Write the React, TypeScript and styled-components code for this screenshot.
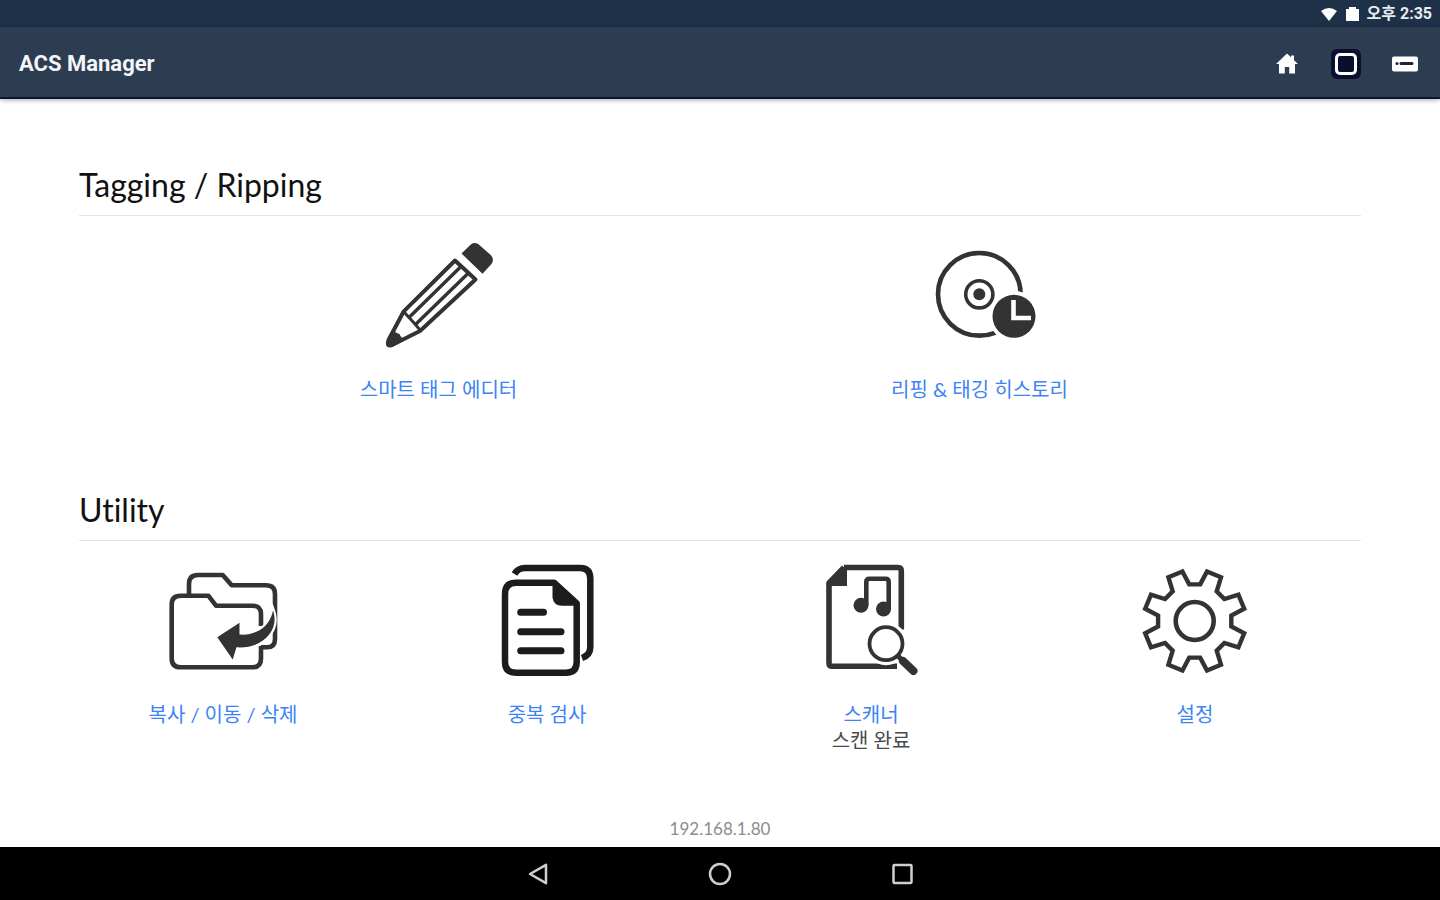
import React from 'react';
import styled, { createGlobalStyle } from 'styled-components';

const INK = '#333333';

const GlobalStyle = createGlobalStyle`
  *, *::before, *::after { box-sizing: border-box; }
  body {
    margin: 0;
    background: #ffffff;
    color: #111111;
    font-family: Lato, "Noto Sans CJK KR", sans-serif;
    font-variant-ligatures: none;
  }
`;

const Screen = styled.div`
  display: flex;
  flex-direction: column;
  min-height: 100vh;
`;

const StatusBar = styled.div`
  display: flex;
  align-items: center;
  justify-content: flex-end;
  gap: 8px;
  height: 27px;
  padding: 0 8px;
  background: #1d3149;
  color: #e9edf1;
`;

const Clock = styled.time`
  font: 700 16px/20px Roboto, "Noto Sans CJK KR", sans-serif;
`;

const Header = styled.header`
  display: flex;
  align-items: center;
  justify-content: space-between;
  height: 72px;
  padding: 4px 20px 0 19px;
  background: #2d3d51;
  border-bottom: 2px solid #04173a;
  box-shadow: 0 1px 5px rgba(0, 0, 0, 0.35);
`;

const Title = styled.h1`
  margin: 0;
  color: #f4f6f8;
  font: 700 22px/28px Roboto, sans-serif;
`;

const Actions = styled.div`
  display: flex;
  gap: 29px;
`;

const IconButton = styled.button`
  display: flex;
  padding: 0;
  border: 0;
  background: none;
  cursor: pointer;
`;

const Main = styled.main`
  display: flex;
  flex: 1;
  flex-direction: column;
  gap: 88px;
  padding: 66px 79px 20px;
`;

const SectionTitle = styled.h2`
  margin: 0 0 20px;
  padding-bottom: 10px;
  border-bottom: 1px solid #e4e4e4;
  font-size: 32px;
  font-weight: 400;
  line-height: 40px;
`;

const Tiles = styled.div<{ $columns: number; $inset: number }>`
  display: grid;
  grid-template-columns: repeat(${(p) => p.$columns}, 1fr);
  margin: 0 ${(p) => p.$inset + 22}px 0 ${(p) => p.$inset}px;
`;

const Tile = styled.button`
  display: flex;
  flex-direction: column;
  align-items: center;
  justify-content: flex-start;
  padding: 0;
  border: 0;
  background: none;
  color: #3c83f6;
  font: inherit;
  font-size: 20px;
  line-height: 26px;
  cursor: pointer;

  svg {
    margin-bottom: 20px;
  }
`;

const TileNote = styled.span`
  color: #4a4a4a;
`;

const Address = styled.footer`
  padding-bottom: 8px;
  color: #8c8c8c;
  font-size: 17px;
  line-height: 20px;
  text-align: center;
`;

const NavBar = styled.nav`
  display: flex;
  align-items: center;
  justify-content: center;
  gap: 158px;
  height: 53px;
  background: #000000;
`;

interface DrawingProps {
  top?: number;
  ink?: string;
  children: React.ReactNode;
}

function Drawing({ top = 1, ink = INK, children }: DrawingProps) {
  return (
    <svg width="120" height="120" viewBox={`0 ${top} 120 120`} fill="none" stroke={ink} aria-hidden="true">
      {children}
    </svg>
  );
}

function Pencil() {
  return (
    <Drawing top={4}>
      <path d="M76 28.500 96.500 47.500 41 99 13 113 Q8 114 9.500 108 L24.500 79.700Z" strokeWidth="4" strokeLinejoin="round" />
      <path d="M83 33.500 30 85.500M90 40.500 36.500 92.500" strokeWidth="3.400" />
      <path d="M25 80 30.500 86 35.500 91.500 41 98" strokeWidth="3" />
      <path d="M14 96.500 Q16 101 20.500 102 Q21.500 106 27 107.500 L13 115 Q6 117 7 110Z" fill={INK} stroke="none" />
      <path d="M82.500 21.500 91 13.200 Q94.800 9.200 99.500 12.200 L112 23.200 Q115.500 27.500 112.500 32 L103.500 41.800Z" fill={INK} stroke="none" />
    </Drawing>
  );
}

function DiscClock() {
  return (
    <Drawing top={4}>
      <circle cx="59.300" cy="62.300" r="41.300" strokeWidth="4.600" />
      <circle cx="59.300" cy="62.300" r="13.600" strokeWidth="3.600" />
      <circle cx="59.300" cy="62.300" r="6" fill={INK} stroke="none" />
      <circle cx="94" cy="84.300" r="25.500" fill="#ffffff" stroke="none" />
      <circle cx="94" cy="84.300" r="21.500" fill={INK} stroke="none" />
      <path d="M93.500 68V86H111" stroke="#ffffff" strokeWidth="4.600" />
    </Drawing>
  );
}

function Folders() {
  return (
    <Drawing>
      <g strokeWidth="4.600" strokeLinejoin="round">
        <path d="M26 34V24Q26 15 35 15H59.700L68.700 25.300H103Q112 25.300 112 34V79Q112 87.300 104 87.300H98" />
        <path d="M98 66V54Q98 45.700 89.500 45.700H53L45.300 35.700H17.500Q8.700 35.700 8.700 44.500V98.500Q8.700 107.300 17.500 107.300H89.500Q98 107.300 98 98.500V86" />
      </g>
      <path
        d="M54.300 77.300 76.500 62.800V74.500C94 76 107 66 110 50.500C117 70 100 89 73.500 87.300L69.700 99.500Z"
        fill={INK}
        stroke="#ffffff"
        strokeWidth="4"
        paintOrder="stroke"
      />
    </Drawing>
  );
}

function Documents() {
  return (
    <Drawing ink="#1c1c1c">
      <g strokeWidth="6.500">
        <path d="M27.500 14Q31 8 38 8H93Q103.300 8 103.300 18.500V87Q103.300 95 95 98" />
        <path
          d="M29 22.700H67L89.700 43.500V102Q89.700 112.700 79 112.700H29Q18 112.700 18 102V34Q18 22.700 29 22.700Z"
          strokeLinejoin="round"
        />
      </g>
      <path d="M65.500 23V37.500Q66.500 45.700 75 45.700H91L70 23Z" fill="#1c1c1c" stroke="none" />
      <path d="M33.700 52.300H56.500M33.700 71.700H74M33.700 90.700H74" strokeLinecap="round" strokeWidth="7" />
    </Drawing>
  );
}

function Scanner() {
  return (
    <Drawing>
      <path d="M33 7.500H87Q90.300 7.500 90.300 11V69.500M86 106.300H21Q18 106.300 18 103V23L33 7.500" strokeWidth="5.600" strokeLinejoin="round" />
      <path d="M17 23 33 6.500 36 8V26H17Z" fill={INK} stroke="none" />
      <path d="M55.300 45V22Q55.300 18.800 58.500 18.800H74.500Q77.700 18.800 77.700 22V49" strokeWidth="4.600" />
      <circle cx="50" cy="45.300" r="7.500" fill={INK} stroke="none" />
      <circle cx="72.500" cy="49" r="7.500" fill={INK} stroke="none" />
      <circle cx="75" cy="83.700" r="21.500" fill="#ffffff" stroke="none" />
      <circle cx="75" cy="83.700" r="16.500" strokeWidth="3.800" />
      <path d="M87 96 91 100" strokeWidth="5" />
      <path d="M92 101 102.500 111" strokeWidth="8" strokeLinecap="round" />
    </Drawing>
  );
}

function gearOutline(cx: number, cy: number): string {
  const points: string[] = [];
  const add = (degrees: number, radius: number) => {
    const a = (degrees * Math.PI) / 180;
    points.push(`${(cx + radius * Math.sin(a)).toFixed(1)},${(cy - radius * Math.cos(a)).toFixed(1)}`);
  };
  for (let tooth = 0; tooth < 8; tooth += 1) {
    const middle = 22.5 + tooth * 45;
    add(middle - 14, 37);
    add(middle - 8.5, 51);
    add(middle + 8.5, 51);
    add(middle + 14, 37);
  }
  return points.join(' ');
}

function Gear() {
  return (
    <Drawing>
      <polygon points={gearOutline(59.7, 61)} strokeWidth="4.400" />
      <circle cx="59.700" cy="61" r="19" strokeWidth="4.600" />
    </Drawing>
  );
}

export default function App() {
  return (
    <Screen>
      <GlobalStyle />
      <StatusBar>
        <svg width="18" height="14" viewBox="0 0 18 14" fill="#ffffff" aria-hidden="true">
          <path d="M1 4Q9-2 17 4L9 14Z" />
        </svg>
        <svg width="13" height="16" viewBox="0 0 13 16" fill="#ffffff" aria-hidden="true">
          <path d="M0 3H3V1H10V3H13V15H0Z" />
        </svg>
        <Clock>오후 2:35</Clock>
      </StatusBar>
      <Header>
        <Title>ACS Manager</Title>
        <Actions>
          <IconButton aria-label="Home">
            <svg width="30" height="30" viewBox="0 0 30 30" fill="#ffffff" aria-hidden="true">
              <path d="M15 4.500 4 15H7V24.500H12.800V18H17.200V24.500H23V15H26L22 11.200V6.500H19V8.300Z" />
            </svg>
          </IconButton>
          <IconButton aria-label="Select">
            <svg width="30" height="30" viewBox="0 0 30 30" aria-hidden="true">
              <rect width="30" height="30" rx="6" fill="#0b0e2c" />
              <rect x="5.500" y="5.500" width="19" height="19" rx="3.500" fill="none" stroke="#ffffff" strokeWidth="3" />
            </svg>
          </IconButton>
          <IconButton aria-label="Device">
            <svg width="30" height="30" viewBox="0 0 30 30" aria-hidden="true">
              <rect x="2" y="7.500" width="26" height="15" rx="2" fill="#ffffff" />
              <circle cx="7" cy="14.500" r="1.500" fill="#16263f" />
              <path d="M11 14.500H22" stroke="#16263f" strokeWidth="3" strokeLinecap="round" />
            </svg>
          </IconButton>
        </Actions>
      </Header>
      <Main>
        <section>
          <SectionTitle>Tagging / Ripping</SectionTitle>
          <Tiles $columns={2} $inset={89}>
            <Tile>
              <Pencil />
              스마트 태그 에디터
            </Tile>
            <Tile>
              <DiscClock />
              리핑 &amp; 태깅 히스토리
            </Tile>
          </Tiles>
        </section>
        <section>
          <SectionTitle>Utility</SectionTitle>
          <Tiles $columns={4} $inset={-18}>
            <Tile>
              <Folders />
              복사 / 이동 / 삭제
            </Tile>
            <Tile>
              <Documents />
              중복 검사
            </Tile>
            <Tile>
              <Scanner />
              스캐너
              <TileNote>스캔 완료</TileNote>
            </Tile>
            <Tile>
              <Gear />
              설정
            </Tile>
          </Tiles>
        </section>
      </Main>
      <Address>192.168.1.80</Address>
      <NavBar>
        <IconButton aria-label="Back">
          <svg width="24" height="24" viewBox="0 0 24 24" fill="none" stroke="#cfcfcf" strokeWidth="2.500" aria-hidden="true">
            <path d="M20 2.800V21.200L4 12Z" strokeLinejoin="round" />
          </svg>
        </IconButton>
        <IconButton aria-label="Home screen">
          <svg width="24" height="24" viewBox="0 0 24 24" fill="none" stroke="#cfcfcf" strokeWidth="2.500" aria-hidden="true">
            <circle cx="12" cy="12" r="10" />
          </svg>
        </IconButton>
        <IconButton aria-label="Recent apps">
          <svg width="24" height="24" viewBox="0 0 24 24" fill="none" stroke="#cfcfcf" strokeWidth="2.500" aria-hidden="true">
            <rect x="3.500" y="3" width="18" height="18" rx="1" />
          </svg>
        </IconButton>
      </NavBar>
    </Screen>
  );
}
